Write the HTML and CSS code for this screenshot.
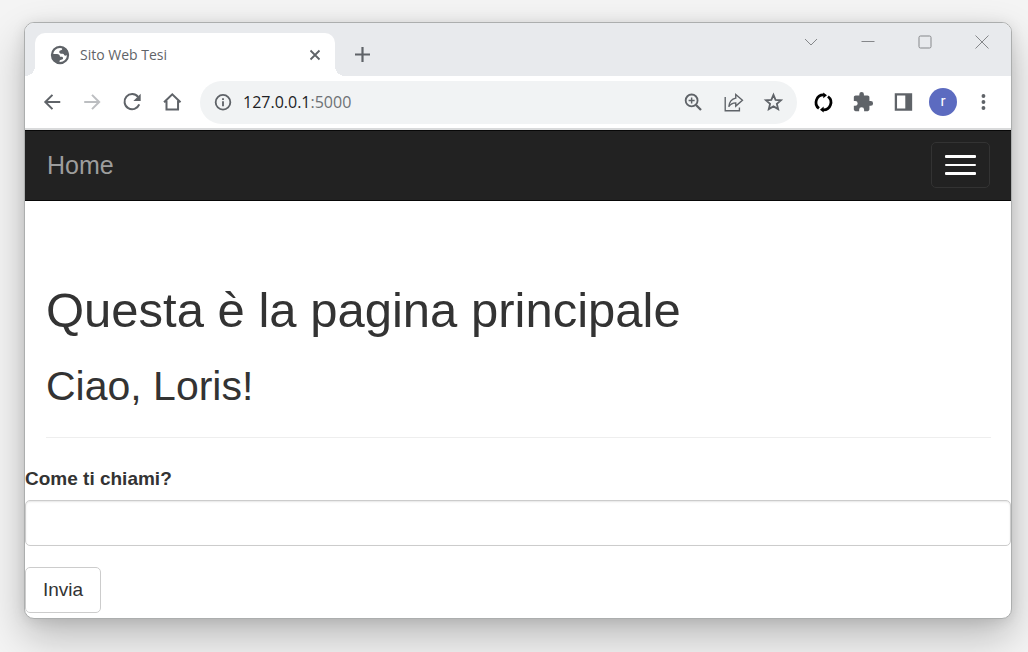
FILE: index.html
```html
<!DOCTYPE html>
<html lang="it">
<head>
<meta charset="utf-8">
<meta name="viewport" content="width=device-width, initial-scale=1">
<title>Sito Web Tesi</title>
<link rel="stylesheet" href="styles.css">
</head>
<body>
<div class="window">
  <header class="tabstrip">
    <div class="tab">
      <svg class="icon" viewBox="0 0 24 24"><circle cx="12" cy="12" r="8.800" fill="#fff" stroke="#5f6368" stroke-width="2.400"/><path fill="#5f6368" d="M14 3.200c4 .6 7.200 4 7.400 8.200l-2.800 1.200c-1 .4-1.800-.1-2.200-1-.3-.8-.9-1.100-1.800-1.100h-1.500c-1.200 0-1.900-.7-1.900-1.700s.7-1.700 1.800-1.900c1-.2 1.500-.8 1.400-1.700zM3 11h5.700c2 0 3.200 1 3.300 2.800h1.500c1.300 0 1.900.7 1.900 1.600 0 1.100-.8 1.700-2 1.800-1.300.1-1.900.7-1.900 2v2C6.500 21 3 17 3 11z"/></svg>
      <span class="tab-title">Sito Web Tesi</span>
      <button class="tab-close" aria-label="Chiudi scheda"><svg viewBox="0 0 16 16"><path d="M3.500 3.500l9 9M12.500 3.500l-9 9" stroke="#5f6368" stroke-width="1.800"/></svg></button>
    </div>
    <button class="new-tab" aria-label="Nuova scheda"><svg viewBox="0 0 20 20"><path d="M10.500 2v15M3 9.500h15" stroke="#5f6368" stroke-width="2.200"/></svg></button>
    <div class="window-controls">
      <button aria-label="Cerca schede"><svg viewBox="0 0 16 16"><path d="M2 5l6 6 6-6"/></svg></button>
      <button aria-label="Riduci a icona"><svg viewBox="0 0 16 16"><path d="M1.500 7.500h13"/></svg></button>
      <button aria-label="Ingrandisci"><svg viewBox="0 0 16 16"><rect x="2" y="2" width="12" height="12" rx="1.500"/></svg></button>
      <button aria-label="Chiudi"><svg viewBox="0 0 16 16"><path d="M1.500 1.500l13 13M14.500 1.500l-13 13"/></svg></button>
    </div>
  </header>

  <div class="toolbar">
    <button class="tool" aria-label="Indietro"><svg class="icon" viewBox="0 0 24 24"><path d="M21 12H5M12.500 4.200L4.700 12l7.800 7.800" fill="none" stroke="#5f6368" stroke-width="2.200"/></svg></button>
    <button class="tool" aria-label="Avanti" disabled><svg class="icon" viewBox="0 0 24 24"><path d="M3.500 12h16M12 4.200l7.800 7.800-7.800 7.800" fill="none" stroke="#bcbec1" stroke-width="2.200"/></svg></button>
    <button class="tool" aria-label="Ricarica"><svg class="icon" viewBox="0 0 24 24"><path d="M18.600 6.400A8.300 8.300 0 1 0 19.900 14.700" fill="none" stroke="#5f6368" stroke-width="2.200"/><path d="M21.500 3v8h-8z" fill="#5f6368"/></svg></button>
    <button class="tool" aria-label="Home"><svg class="icon" viewBox="0 0 24 24"><path d="M3.300 12.300L12.300 3.700l9 8.600M6 10.500v9.700h12.600v-9.700" fill="none" stroke="#5f6368" stroke-width="2.200"/></svg></button>

    <div class="omnibox">
      <svg class="icon" viewBox="0 0 24 24"><circle cx="12" cy="12.300" r="8" fill="none" stroke="#5f6368" stroke-width="2"/><path d="M12 11.300v5.200M12 7.800v2" stroke="#5f6368" stroke-width="2"/></svg>
      <div class="url" role="textbox" aria-label="Indirizzo">127.0.0.1<span class="port">:5000</span></div>
      <button class="tool" aria-label="Zoom"><svg class="icon" viewBox="0 0 24 24" fill="none" stroke="#5f6368"><circle cx="10.500" cy="10.300" r="6.500" stroke-width="2"/><path d="M15.300 15.300l5.400 5.400" stroke-width="2.500"/><path d="M10.500 7v6.600M7.200 10.300h6.600" stroke-width="1.600"/></svg></button>
      <button class="tool" aria-label="Condividi"><svg class="icon" viewBox="0 0 24 24" fill="none" stroke="#5f6368" stroke-width="1.500"><path d="M3.500 6.500v15h15.500v-3.500"/><path d="M15 3.800l7.300 6.400-7.300 6.300v-3.600c-4 0-6 1.600-7.600 4.300.5-5 3.300-8.700 7.600-9.500z"/></svg></button>
      <button class="tool" aria-label="Aggiungi ai preferiti"><svg class="icon" viewBox="0 0 24 24"><path d="M12.500 4.300l2.300 5.400 5.900.5-4.500 3.900 1.400 5.700-5.100-3-5.100 3 1.400-5.700-4.500-3.900 5.900-.5z" fill="none" stroke="#5f6368" stroke-width="2"/></svg></button>
    </div>

    <button class="tool" aria-label="Sincronizza"><svg class="icon" viewBox="0 0 24 24"><path d="M7.600 19A8.200 8.200 0 0 1 13 4.300M17.400 6A8.200 8.200 0 0 1 12 20.700" fill="none" stroke="#000" stroke-width="3"/><path d="M12.300 1.500l4 3-4 3.500zM12.700 23.500l-4-3 4-3.500z"/></svg></button>
    <button class="tool" aria-label="Estensioni"><svg class="icon" viewBox="0 0 24 24"><path fill="#5f6368" d="M20.500 11H19V7c0-1.100-.9-2-2-2h-4V3.500a2.500 2.500 0 0 0-5 0V5H4c-1.100 0-2 .9-2 2v3.800h1.500a2.700 2.700 0 0 1 0 5.400H2V20c0 1.100.9 2 2 2h3.800v-1.500a2.700 2.700 0 0 1 5.400 0V22H17c1.100 0 2-.9 2-2v-4h1.500a2.500 2.500 0 0 0 0-5z"/></svg></button>
    <button class="tool" aria-label="Pannello laterale"><svg class="icon" viewBox="0 0 24 24"><path fill="#5f6368" fill-rule="evenodd" d="M3 2.500h19v19H3zM5.500 5v14h9V5z"/></svg></button>
    <button class="tool" aria-label="Profilo"><span class="avatar">r</span></button>
    <button class="tool" aria-label="Menu"><svg class="icon" viewBox="0 0 24 24" fill="#5f6368"><circle cx="12.500" cy="5.500" r="2.100"/><circle cx="12.500" cy="12" r="2.100"/><circle cx="12.500" cy="18.500" r="2.100"/></svg></button>
  </div>

  <nav class="navbar">
    <a class="brand" href="#">Home</a>
    <button class="toggle" aria-label="Apri navigazione"><span></span><span></span><span></span></button>
  </nav>

  <main>
    <div class="container">
      <h1>Questa è la pagina principale</h1>
      <h2>Ciao, Loris!</h2>
      <hr>
    </div>
    <form class="form">
      <label for="name">Come ti chiami?</label>
      <input id="name" type="text" class="field">
      <button class="submit" type="button">Invia</button>
    </form>
  </main>
</div>
</body>
</html>
```

FILE: styles.css
```css
* { box-sizing: border-box; }

body {
  margin: 0;
  padding: 22px 16px 33px 24px;
  background: #f4f4f4;
  color: #333;
  font-family: "Liberation Sans", Arial, sans-serif;
  overflow: hidden;
}

button {
  display: flex;
  align-items: center;
  justify-content: center;
  padding: 0;
  border: 0;
  background: none;
  font-family: inherit;
}

.window {
  overflow: hidden;
  border: 1px solid #acaeae;
  border-radius: 10px;
  background: #fff;
  box-shadow: 0 18px 40px rgba(0, 0, 0, .24), 0 2px 14px rgba(0, 0, 0, .1);
}

.icon {
  display: block;
  flex: none;
  width: 22px;
  height: 22px;
}

/* Tab strip */
.tabstrip {
  display: flex;
  height: 53px;
  padding: 10px 0 0 10px;
  background: #e8eaed;
}

.tab {
  position: relative;
  display: flex;
  align-items: center;
  gap: 9px;
  width: 300px;
  padding: 0 12px 0 14px;
  border-radius: 10px 10px 0 0;
  background: #fff;
}

.tab::before,
.tab::after {
  content: "";
  position: absolute;
  bottom: 0;
  width: 10px;
  height: 10px;
}

.tab::before {
  right: 100%;
  background: radial-gradient(circle at 0 0, #e8eaed 10px, #fff 10px);
}

.tab::after {
  left: 100%;
  background: radial-gradient(circle at 100% 0, #e8eaed 10px, #fff 10px);
}

.tab-title {
  flex: 1;
  color: #5f6368;
  font: 14px/20px "Open Sans", sans-serif;
}

.tab-close svg {
  width: 16px;
  height: 16px;
}

.new-tab {
  width: 54px;
}

.new-tab svg {
  width: 20px;
  height: 20px;
}

.window-controls {
  display: flex;
  align-items: flex-start;
  margin: 0 1px 0 auto;
}

.window-controls button {
  width: 57px;
  height: 18px;
}

.window-controls svg {
  width: 16px;
  height: 16px;
  fill: none;
  stroke: #85878a;
}

/* Toolbar */
.toolbar {
  display: flex;
  align-items: center;
  height: 54px;
  padding: 0 8px 0 7px;
  border-bottom: 2px solid #d9dadb;
}

.tool {
  flex: none;
  width: 40px;
  height: 40px;
}

.omnibox {
  display: flex;
  align-items: center;
  flex: 1;
  height: 43px;
  margin: 0 6px 0 8px;
  padding: 0 4px 0 12px;
  border-radius: 22px;
  background: #f1f3f4;
}

.url {
  flex: 1;
  padding-left: 9px;
  color: #202124;
  font: 16px/24px "Open Sans", sans-serif;
}

.port {
  color: #6d7175;
}

.avatar {
  width: 28px;
  height: 28px;
  border-radius: 50%;
  background: #5c6bc0;
  color: #fff;
  font: 15px/27px Roboto, sans-serif;
  text-align: center;
}

/* Site navbar */
.navbar {
  display: flex;
  align-items: center;
  justify-content: space-between;
  height: 71px;
  padding: 0 21px 1px 22px;
  border: solid #080808;
  border-width: 1px 0;
  background: #222;
}

.brand {
  color: #9d9d9d;
  font-size: 25px;
  line-height: 28px;
  text-decoration: none;
}

.toggle {
  flex-direction: column;
  gap: 6px;
  width: 59px;
  height: 46px;
  border: 1px solid #333;
  border-radius: 5px;
}

.toggle span {
  width: 31px;
  height: 3px;
  border-radius: 1px;
  background: #fff;
}

.toggle span:nth-child(2) {
  height: 2px;
}

/* Page content */
.container {
  padding: 81px 20px 0 21px;
}

h1,
h2 {
  margin: 0;
  font-weight: 500;
}

h1 {
  font-size: 49px;
  line-height: 56px;
}

h2 {
  margin-top: 26px;
  font-size: 41px;
  line-height: 44px;
}

hr {
  margin: 29px 0 0;
  border: 0;
  border-top: 1px solid #eee;
}

.form {
  display: flex;
  flex-direction: column;
  align-items: flex-start;
  padding: 27px 0 5px;
}

label {
  font-size: 19px;
  font-weight: 700;
  line-height: 28px;
}

.field {
  width: 100%;
  height: 46px;
  margin: 7px 0 21px;
  padding: 8px 16px;
  border: 1px solid #ccc;
  border-radius: 5px;
  box-shadow: inset 0 1px 2px rgba(0, 0, 0, .1);
  font: 19px "Liberation Sans", Arial, sans-serif;
}

.submit {
  height: 46px;
  padding: 0 17px;
  border: 1px solid #ccc;
  border-radius: 5px;
  background: #fff;
  color: #333;
  font-size: 19px;
}
```
